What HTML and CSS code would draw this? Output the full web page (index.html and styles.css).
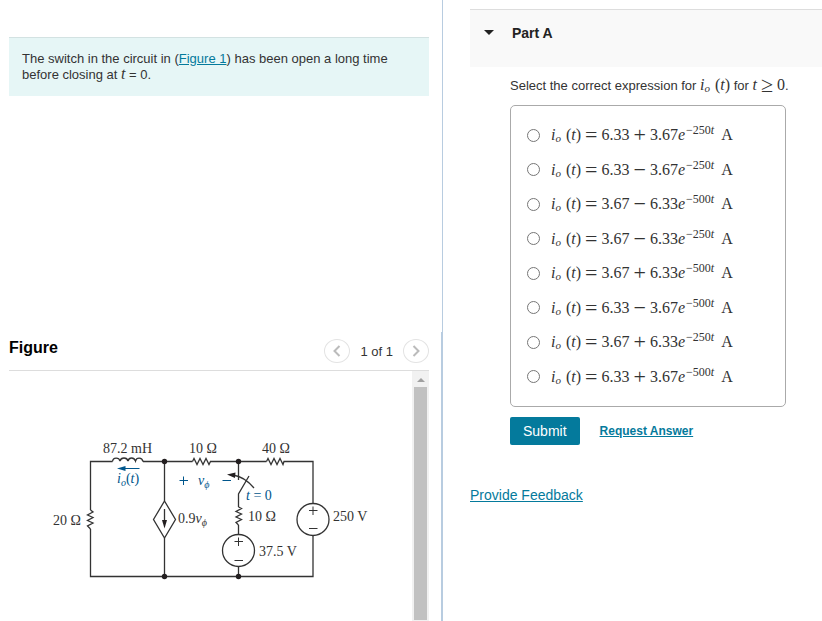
FILE: index.html
```html
<!DOCTYPE html>
<html lang="en">
<head>
    <meta charset="UTF-8">
    <meta name="viewport" content="width=device-width, initial-scale=1.0">
    <title>Part A</title>
    <link rel="stylesheet" href="styles.css">
</head>
<body>
    <div class="page">
        <div class="left">
            <section class="problem">
                <p class="intro">The switch in the circuit in (<a href="#figure">Figure 1</a>) has been open a long time before closing at <span class="math"><i>t</i></span> = 0.</p>
            </section>

            <section class="figure" id="figure">
                <header class="figure-header">
                    <h2>Figure</h2>
                    <div class="pager">
                        <button type="button" aria-label="Previous figure">
                            <svg width="8" height="12" viewBox="0 0 8 12"><path d="M6.5 1 L1.5 6 L6.5 11"/></svg>
                        </button>
                        <span>1 of 1</span>
                        <button type="button" aria-label="Next figure">
                            <svg width="8" height="12" viewBox="0 0 8 12"><path d="M1.5 1 L6.5 6 L1.5 11"/></svg>
                        </button>
                    </div>
                </header>

                <div class="figure-body">
                    <div class="drawing">
                        <svg class="circuit" width="403" height="250" viewBox="9 371 403 250">
                            <!-- wires -->
                            <g class="wire">
                                <path d="M112.5 461.5 H90.5 V510"/>
                                <path d="M90.5 529 V576.5 H313 V536"/>
                                <path d="M143 461.5 H192.5"/>
                                <path d="M212 461.5 H266.5"/>
                                <path d="M285 461.5 H313 V503"/>
                                <path d="M164.5 461.5 V501"/>
                                <path d="M164.5 538 V576.5"/>
                                <path d="M238.5 461.5 V480"/>
                                <path d="M238.5 507 V494 L249 476"/>
                                <path d="M238.5 525 V534"/>
                                <path d="M238.5 567 V576.5"/>
                            </g>

                            <!-- inductor and resistors -->
                            <g class="part">
                                <path d="M112.5 461.5 C113 457 119 457 120 461 C121 457 127 457 128 461 C129 457 134 457 135.5 461 C136.5 457 142 457 143 461.5"/>
                                <path d="M192.5 461.5 L194 458.5 L197 464.5 L200 458.5 L203 464.5 L206 458.5 L209 464.5 L210.5 461.5 H212"/>
                                <path d="M266.5 461.5 L268 458.5 L271 464.5 L274 458.5 L277 464.5 L280 458.5 L283 464.5 L284 461.5 H285"/>
                                <path d="M90.5 510 L93 512 L87.5 515 L93 517.5 L87.5 520.5 L93 523 L87.5 526 L90.5 529"/>
                                <path d="M238.5 507 L241.5 508.5 L236 511.5 L241.5 514 L236 517 L241.5 519.5 L236 522.5 L238.5 525"/>
                            </g>

                            <!-- sources -->
                            <g class="source">
                                <path d="M164.5 501 L175.5 519.5 L164.5 538 L153.5 519.5 Z"/>
                                <circle cx="238.5" cy="550.5" r="16"/>
                                <circle cx="313" cy="519.5" r="16"/>
                            </g>
                            <g class="sign">
                                <path d="M234.5 541.5 H243 M238.5 537.5 V546"/>
                                <path d="M234.5 560.5 H243"/>
                                <path d="M309 510.5 H317.5 M313 506.5 V515"/>
                                <path d="M309 528.5 H317.5"/>
                            </g>
                            <path class="part" d="M164.5 509 V522"/>
                            <path class="dot" d="M162 520 L167 520 L164.5 528.5 Z"/>

                            <!-- switch arrow -->
                            <path class="part" d="M254 488 C249 482 243 476.5 233 475"/>
                            <path class="dot" d="M227 474.5 L235.5 472.5 L235 478 Z"/>

                            <!-- nodes -->
                            <g class="dot">
                                <circle cx="164.5" cy="461.5" r="2.7"/>
                                <circle cx="238.5" cy="461.5" r="2.7"/>
                                <circle cx="164.5" cy="576.5" r="2.7"/>
                                <circle cx="238.5" cy="576.5" r="2.7"/>
                            </g>

                            <g class="blue-line">
                                <path d="M123 468.5 H139.5"/>
                                <path class="head" d="M117 468.5 L125.5 466 V471 Z"/>
                                <path d="M179.5 480.5 H188 M183.5 476.5 V485"/>
                                <path d="M222.5 480.5 H231"/>
                            </g>

                            <!-- labels -->
                            <g class="label">
                                <text x="103" y="453">87.2 mH</text>
                                <text x="189" y="453">10 Ω</text>
                                <text x="262" y="453">40 Ω</text>
                                <text x="53" y="525">20 Ω</text>
                                <text x="178" y="523">0.9<tspan class="it">v</tspan><tspan class="it low" dy="3">ϕ</tspan></text>
                                <text x="248" y="521">10 Ω</text>
                                <text x="333" y="521">250 V</text>
                                <text x="259" y="556">37.5 V</text>
                            </g>
                            <g class="label blue">
                                <text x="117" y="483"><tspan class="it">i</tspan><tspan class="it low" dy="3">o</tspan><tspan dy="-3">(</tspan><tspan class="it">t</tspan>)</text>
                                <text x="198" y="485"><tspan class="it">v</tspan><tspan class="it low" dy="3">ϕ</tspan></text>
                                <text x="246" y="500"><tspan class="it">t</tspan> = 0</text>
                            </g>
                        </svg>
                    </div>
                    <div class="scrollbar" aria-hidden="true">
                        <span class="up"></span>
                        <span class="thumb"></span>
                    </div>
                </div>
            </section>
        </div>

        <main class="right">
            <header class="part-header">
                <span class="caret"></span>
                <h2>Part A</h2>
            </header>

            <form class="part-body">
                <p class="question" id="question">Select the correct expression for <span class="math"><i>i</i><sub>o</sub> <span class="arg">(<i>t</i>)</span></span> for <span class="math"><i>t</i><span class="op">≥</span>0</span>.</p>

                <div class="choices" role="radiogroup" aria-labelledby="question">
                    <label><input type="radio" name="answer"><span class="math"><i>i</i><sub>o</sub> <span class="arg">(<i>t</i>)</span><span class="op">=</span>6.33<span class="op">+</span>3.67<i>e</i><sup><span>−</span>250<i>t</i></sup><span class="unit">A</span></span></label>
                    <label><input type="radio" name="answer"><span class="math"><i>i</i><sub>o</sub> <span class="arg">(<i>t</i>)</span><span class="op">=</span>6.33<span class="op">−</span>3.67<i>e</i><sup><span>−</span>250<i>t</i></sup><span class="unit">A</span></span></label>
                    <label><input type="radio" name="answer"><span class="math"><i>i</i><sub>o</sub> <span class="arg">(<i>t</i>)</span><span class="op">=</span>3.67<span class="op">−</span>6.33<i>e</i><sup><span>−</span>500<i>t</i></sup><span class="unit">A</span></span></label>
                    <label><input type="radio" name="answer"><span class="math"><i>i</i><sub>o</sub> <span class="arg">(<i>t</i>)</span><span class="op">=</span>3.67<span class="op">−</span>6.33<i>e</i><sup><span>−</span>250<i>t</i></sup><span class="unit">A</span></span></label>
                    <label><input type="radio" name="answer"><span class="math"><i>i</i><sub>o</sub> <span class="arg">(<i>t</i>)</span><span class="op">=</span>3.67<span class="op">+</span>6.33<i>e</i><sup><span>−</span>500<i>t</i></sup><span class="unit">A</span></span></label>
                    <label><input type="radio" name="answer"><span class="math"><i>i</i><sub>o</sub> <span class="arg">(<i>t</i>)</span><span class="op">=</span>6.33<span class="op">−</span>3.67<i>e</i><sup><span>−</span>500<i>t</i></sup><span class="unit">A</span></span></label>
                    <label><input type="radio" name="answer"><span class="math"><i>i</i><sub>o</sub> <span class="arg">(<i>t</i>)</span><span class="op">=</span>3.67<span class="op">+</span>6.33<i>e</i><sup><span>−</span>250<i>t</i></sup><span class="unit">A</span></span></label>
                    <label><input type="radio" name="answer"><span class="math"><i>i</i><sub>o</sub> <span class="arg">(<i>t</i>)</span><span class="op">=</span>6.33<span class="op">+</span>3.67<i>e</i><sup><span>−</span>500<i>t</i></sup><span class="unit">A</span></span></label>
                </div>

                <div class="actions">
                    <button type="button" class="btn-submit">Submit</button>
                    <a class="request" href="#">Request Answer</a>
                </div>
            </form>

            <a class="feedback" href="#">Provide Feedback</a>
        </main>
    </div>
</body>
</html>
```

FILE: styles.css
```css
* {
    box-sizing: border-box;
}

body {
    margin: 0;
    font-family: "Liberation Sans", Arial, sans-serif;
    font-size: 13px;
    color: #333;
    background-color: white;
}

h2, p {
    margin: 0;
}

a {
    color: #047a9c;
}

.page {
    display: grid;
    grid-template-columns: 442fr 380fr;
    min-height: 100vh;
}

.left {
    display: flex;
    flex-direction: column;
}

.problem {
    flex: 332 1 0;
    padding: 37px 13px 0 9px;
    border-right: 1px solid #b8cce0;
}

.intro {
    padding: 13px;
    line-height: 16px;
    background-color: #e6f6f6;
    border-top: 1px solid #d3e2e2;
}

.intro .math {
    line-height: 0;
}

.figure {
    flex: 289 1 0;
    display: flex;
    flex-direction: column;
    padding: 0 12px 0 9px;
    border-right: 2px solid #b8cce0;
}

.figure-header {
    display: flex;
    justify-content: space-between;
    align-items: center;
    height: 39px;
    border-bottom: 1px solid #ddd;
}

.figure-header h2 {
    font-size: 16px;
    color: black;
    padding-bottom: 6px;
}

.pager {
    display: flex;
    align-items: center;
    gap: 10px;
}

.pager button {
    display: flex;
    align-items: center;
    justify-content: center;
    width: 26px;
    height: 24px;
    padding: 0;
    background-color: white;
    border: 1px solid #e3e3e3;
    border-radius: 50%;
}

.pager svg {
    fill: none;
    stroke: #bbb;
    stroke-width: 2;
}

.figure-body {
    display: flex;
    flex: 1;
}

.drawing {
    flex: 1;
    min-width: 0;
    overflow: hidden;
}

.circuit {
    display: block;
}

.wire, .part, .source, .sign {
    fill: none;
    stroke: #333;
    stroke-width: 1.3;
}

.sign {
    stroke-width: 1;
}

.dot {
    fill: #231f20;
}

.blue-line {
    fill: none;
    stroke: #00568c;
}

.blue-line .head {
    fill: #00568c;
    stroke: none;
}

.label {
    font-family: "Liberation Serif", "Times New Roman", serif;
    font-size: 14px;
    fill: #333;
}

.label.blue {
    fill: #00568c;
}

.it {
    font-style: italic;
}

.low {
    font-size: 10px;
}

.scrollbar {
    display: flex;
    flex-direction: column;
    align-items: center;
    flex: 0 0 17px;
    padding-bottom: 1px;
    background-color: #f1f1f1;
}

.up {
    margin: 7px 0 5px;
    border: 4px solid transparent;
    border-top: 0;
    border-bottom-color: #a0a0a0;
}

.thumb {
    flex: 1;
    width: 13px;
    background-color: #c1c1c1;
}

.right {
    padding: 9px 0 0 27px;
}

.part-header {
    display: flex;
    align-items: center;
    gap: 18px;
    height: 58px;
    padding: 0 14px 12px;
    background-color: #f9f9f9;
    border-top: 1px solid #ddd;
}

.part-header h2 {
    font-size: 14px;
    color: #222;
}

.caret {
    border: 5px solid transparent;
    border-bottom: 0;
    border-top-color: #222;
}

.part-body {
    padding: 8px 20px 0 40px;
}

.question {
    line-height: 22px;
}

.math {
    font-family: "Liberation Serif", "Times New Roman", serif;
    font-size: 16px;
    line-height: 20px;
    white-space: nowrap;
}

.math sub {
    font-size: 11px;
    font-style: italic;
    line-height: 0;
    vertical-align: -2px;
}

.math sup {
    font-size: 12px;
    line-height: 0;
    vertical-align: 6px;
    margin-left: 1px;
}

.arg {
    margin-left: 1px;
}

.op {
    font-size: 22px;
    line-height: 0;
    vertical-align: -2px;
    margin: 0 4px;
}

.unit {
    margin-left: 7px;
}

.choices {
    display: grid;
    grid-auto-rows: 1fr;
    width: max-content;
    min-height: 302px;
    margin-top: 8px;
    padding: 12px 52px 12px 16px;
    border: 1px solid #aaa;
    border-radius: 5px;
}

.choices label {
    display: flex;
    align-items: center;
    gap: 11px;
}

.choices input {
    width: 13px;
    height: 13px;
    margin: 0;
}

.actions {
    display: flex;
    align-items: center;
    gap: 20px;
    margin-top: 10px;
}

.btn-submit {
    height: 28px;
    padding: 0 13px;
    font-family: inherit;
    font-size: 14px;
    color: white;
    background-color: #047a9c;
    border: none;
    border-radius: 2px;
}

.request {
    font-size: 12px;
    font-weight: bold;
}

.feedback {
    display: inline-block;
    margin-top: 42px;
    font-size: 14px;
}
```
